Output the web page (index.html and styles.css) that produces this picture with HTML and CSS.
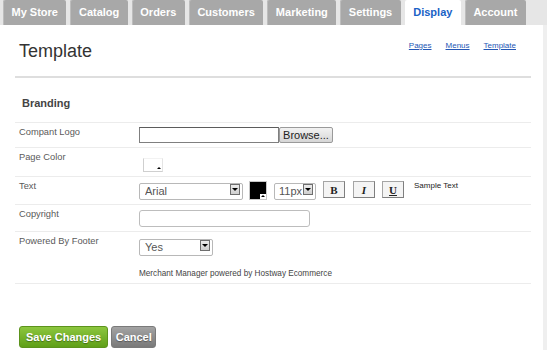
FILE: index.html
```html
<!DOCTYPE html>
<html lang="en">
<head>
  <meta charset="UTF-8">
  <title>Display - Template</title>
  <link rel="stylesheet" href="styles.css">
</head>
<body>
  <div class="page">
    <!-- Top tabs -->
    <ul class="tabs">
      <li class="tab">My Store</li>
      <li class="tab">Catalog</li>
      <li class="tab">Orders</li>
      <li class="tab">Customers</li>
      <li class="tab">Marketing</li>
      <li class="tab">Settings</li>
      <li class="tab active">Display</li>
      <li class="tab">Account</li>
    </ul>

    <div class="main">
      <!-- Page header -->
      <div class="page-head">
        <h1>Template</h1>
        <nav class="sub-links">
          <a href="#">Pages</a>
          <a href="#">Menus</a>
          <a href="#">Template</a>
        </nav>
      </div>

      <h2 class="section-title">Branding</h2>

      <!-- Branding form -->
      <div class="form-rows">
        <div class="form-row">
          <div class="form-label">Compant Logo</div>
          <div class="form-field">
            <input type="text" class="file-text">
            <button class="browse-btn">Browse...</button>
          </div>
        </div>

        <div class="form-row">
          <div class="form-label">Page Color</div>
          <div class="form-field">
            <span class="swatch swatch-page"><span class="picker-arrow"></span></span>
          </div>
        </div>

        <div class="form-row">
          <div class="form-label">Text</div>
          <div class="form-field text-tools">
            <span class="select font-select">
              <select><option>Arial</option></select>
              <span class="select-btn"></span>
            </span>
            <span class="swatch swatch-text"><span class="picker-arrow"></span></span>
            <span class="select size-select">
              <select><option>11px</option></select>
              <span class="select-btn"></span>
            </span>
            <button class="style-btn bold-btn">B</button>
            <button class="style-btn italic-btn">I</button>
            <button class="style-btn underline-btn">U</button>
            <span class="sample-text">Sample Text</span>
          </div>
        </div>

        <div class="form-row">
          <div class="form-label">Copyright</div>
          <div class="form-field">
            <input type="text" class="text-input copyright-input">
          </div>
        </div>

        <div class="form-row">
          <div class="form-label">Powered By Footer</div>
          <div class="form-field stacked">
            <span class="select footer-select">
              <select><option>Yes</option><option>No</option></select>
              <span class="select-btn"></span>
            </span>
            <p class="footer-note">Merchant Manager powered by Hostway Ecommerce</p>
          </div>
        </div>
      </div>

      <!-- Actions -->
      <div class="actions">
        <button class="action-btn save-btn">Save Changes</button>
        <button class="action-btn cancel-btn">Cancel</button>
      </div>
    </div>
  </div>
</body>
</html>
```

FILE: styles.css
```css
/* Basic Reset */
* {
  margin: 0;
  padding: 0;
  box-sizing: border-box;
}

body {
  background-color: #efefef;
  font-family: "Liberation Sans", Arial, sans-serif;
  height: 350px;
  overflow: hidden;
}

.page {
  width: 543px;
  min-height: 350px;
  background-color: #fff;
}

/* Tabs */
.tabs {
  display: flex;
  gap: 4px;
  list-style: none;
  height: 25px;
  padding-left: 3px;
  background-color: #e6e6e6;
  width: 547px;
}

.tab {
  padding: 0 8.5px;
  line-height: 25px;
  background-color: #a8a8a8;
  color: #fff;
  font-size: 11px;
  font-weight: bold;
  border-radius: 2px 2px 0 0;
  box-shadow: inset 1px 0 0 #bdbdbd;
}

.tab.active {
  background-color: #fff;
  color: #1a62c6;
  box-shadow: none;
}

/* Main area */
.main {
  padding: 0 12px 0 15px;
}

.page-head {
  display: flex;
  justify-content: space-between;
  align-items: flex-start;
  padding: 16px 15px 15px 4px;
  border-bottom: 2px solid #dedede;
}

.page-head h1 {
  font-size: 18px;
  line-height: 20px;
  font-weight: normal;
  color: #333;
}

.sub-links {
  display: flex;
  gap: 14px;
  font-size: 8px;
  line-height: 10px;
}

.sub-links a {
  color: #2457b5;
  text-decoration: underline;
}

.section-title {
  margin-top: 19px;
  padding: 0 0 12px 7px;
  font-size: 11px;
  line-height: 13px;
  font-weight: bold;
  color: #444;
}

/* Form rows */
.form-rows {
  border-bottom: 1px solid #ececec;
}

.form-row {
  display: flex;
  align-items: flex-start;
  border-top: 1px solid #ececec;
  padding: 4px 0;
}

.form-label {
  width: 124px;
  padding-left: 4px;
  font-size: 9.3px;
  line-height: 11px;
  color: #5a5a5a;
}

.form-field {
  display: flex;
  align-items: flex-start;
  flex: 1;
}

.form-field.stacked {
  flex-direction: column;
}

.file-text {
  width: 140px;
  height: 16px;
  border: 1px solid #7f7f7f;
  border-top-color: #5c5c5c;
  background-color: #fff;
}

.browse-btn {
  width: 54px;
  height: 16px;
  border: 1px solid #9a9a9a;
  border-radius: 2px;
  background: linear-gradient(#f2f2f2, #d6d6d6);
  font-family: "Liberation Sans", Arial, sans-serif;
  font-size: 11px;
  color: #222;
}

/* Colour swatches */
.swatch {
  position: relative;
  display: block;
  border: 1px solid #cfcfcf;
}

.swatch-page {
  width: 20px;
  height: 14px;
  margin: 6px 0 0 4px;
  background-color: #fff;
  border-top-color: #f2f2f2;
  border-right-color: #e4e4e4;
}

.swatch-text {
  width: 18px;
  height: 19px;
  background-color: #000;
  border-color: #c8c8c8;
}

.picker-arrow {
  position: absolute;
  right: 0;
  bottom: 0;
  width: 6px;
  height: 5px;
  background-color: #fff;
}

.picker-arrow::after {
  content: "";
  position: absolute;
  left: 1px;
  top: 1px;
  border-left: 2px solid transparent;
  border-right: 2px solid transparent;
  border-bottom: 2px solid #000;
}

/* Select boxes */
.select {
  position: relative;
  display: block;
  height: 17px;
}

.select select {
  appearance: none;
  -webkit-appearance: none;
  width: 100%;
  height: 100%;
  padding-left: 5px;
  border: 1px solid #b8b8b8;
  border-radius: 2px;
  background-color: #fff;
  font-family: "Liberation Sans", Arial, sans-serif;
  font-size: 11px;
  color: #555;
}

.select-btn {
  position: absolute;
  top: 3px;
  right: 3px;
  width: 10px;
  height: 11px;
  border: 1px solid #6e6e6e;
  background: linear-gradient(#ececec, #cfcfcf);
  pointer-events: none;
}

.select-btn::after {
  content: "";
  position: absolute;
  left: 1px;
  top: 3px;
  border-left: 3px solid transparent;
  border-right: 3px solid transparent;
  border-top: 3px solid #000;
}

.text-tools {
  gap: 7px;
}

.font-select {
  width: 104px;
  margin-right: -1px;
}

.size-select {
  width: 42px;
}

.size-select select {
  padding-left: 4px;
}

.footer-select {
  width: 74px;
  margin-top: 1px;
}

/* Style buttons */
.style-btn {
  width: 22px;
  height: 17px;
  border: 1px solid #a5a5a5;
  border-right-color: #7f7f7f;
  border-bottom-color: #7f7f7f;
  background-color: #f4f4f4;
  font-family: "Liberation Serif", "Times New Roman", serif;
  font-size: 11px;
  font-weight: bold;
  color: #222;
}

.italic-btn { font-style: italic; margin-left: 1px; }
.underline-btn { text-decoration: underline; }

.sample-text {
  margin-left: 3px;
  font-size: 8px;
  line-height: 10px;
  color: #222;
}

/* Text inputs */
.text-input {
  height: 17px;
  margin-top: 1px;
  border: 1px solid #bdbdbd;
  border-radius: 3px;
  background-color: #fff;
}

.copyright-input {
  width: 171px;
}

.footer-note {
  margin-top: 15px;
  font-size: 8.2px;
  line-height: 10px;
  color: #444;
}

/* Actions */
.actions {
  display: flex;
  gap: 3px;
  margin-top: 42px;
  padding-left: 4px;
}

.action-btn {
  height: 22px;
  border-radius: 3px;
  font-family: "Liberation Sans", Arial, sans-serif;
  font-size: 11px;
  font-weight: bold;
  color: #fff;
  text-shadow: 0 1px 1px rgba(0, 0, 0, 0.35);
}

.save-btn {
  padding: 0 6px;
  border: 1px solid #5c931c;
  background: linear-gradient(#8cc63e, #5f9f18);
}

.cancel-btn {
  padding: 0 3.5px;
  border: 1px solid #7a7a7a;
  background: linear-gradient(#a3a3a3, #797979);
}
```
